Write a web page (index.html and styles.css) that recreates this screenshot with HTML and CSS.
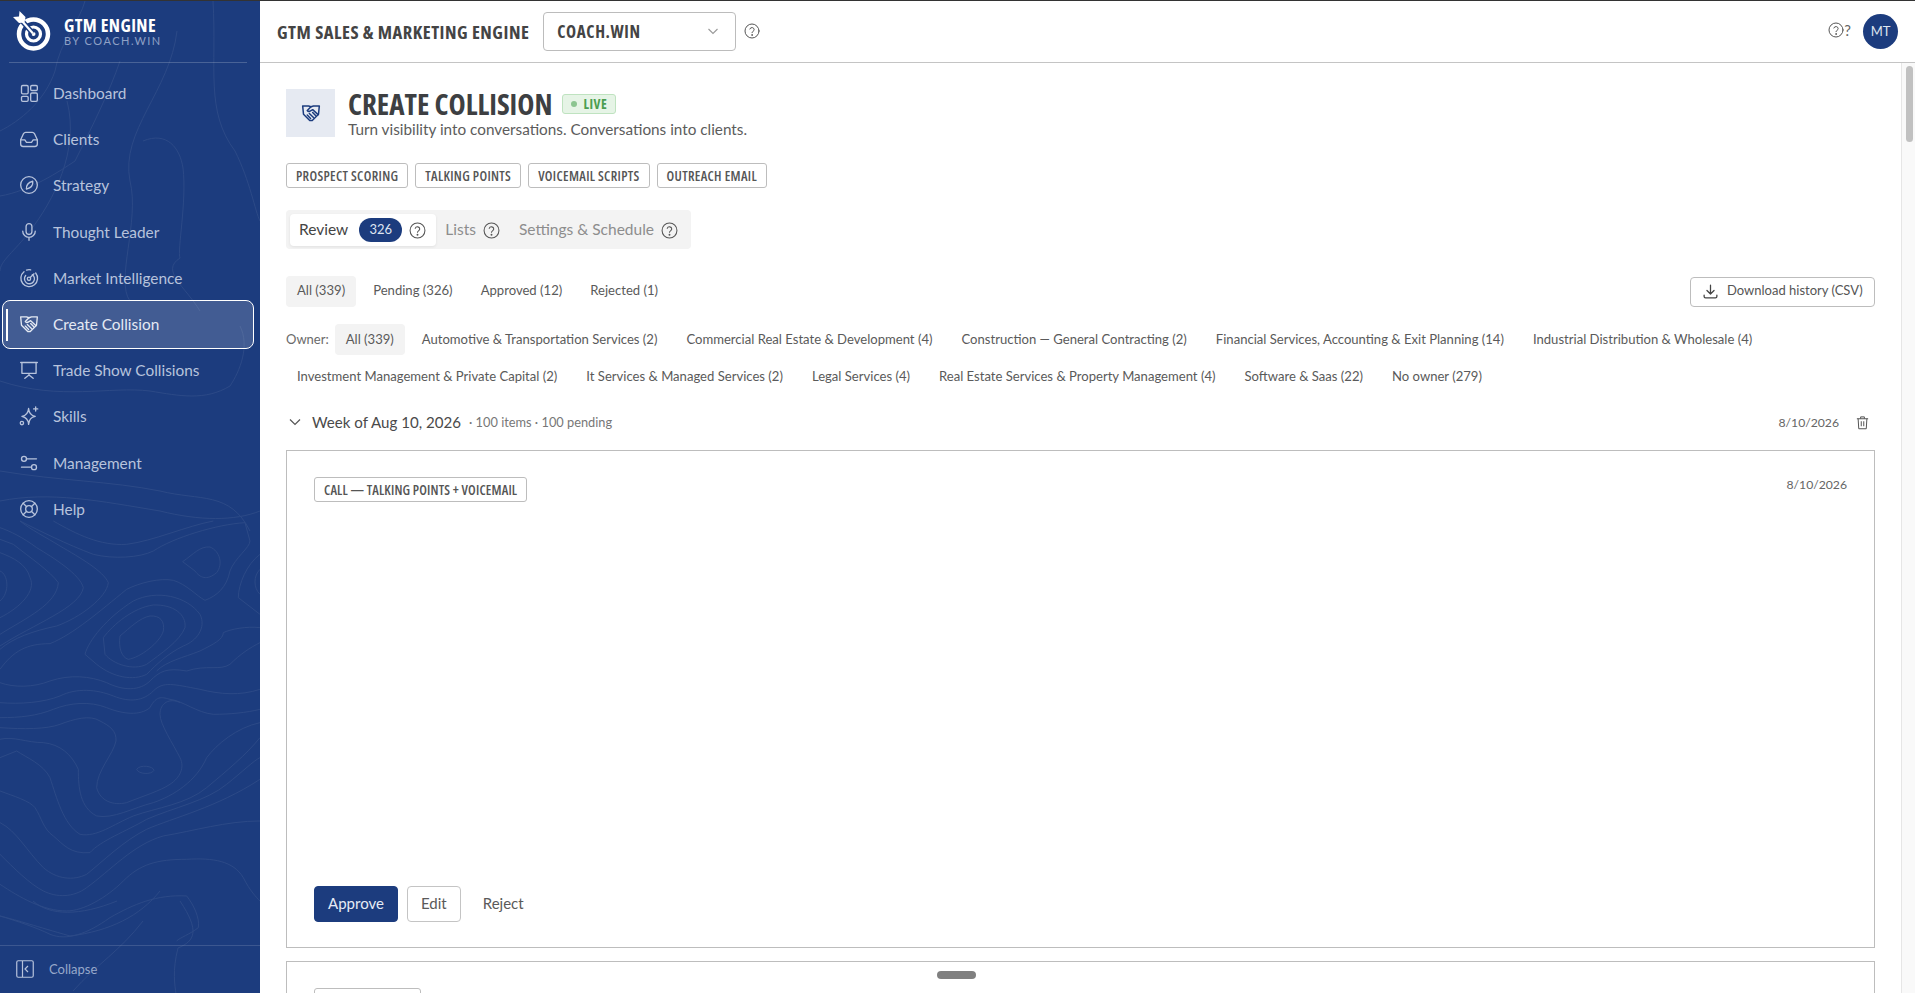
FILE: index.html
```html
<!DOCTYPE html>
<html lang="en">
<head>
  <meta charset="UTF-8">
  <meta name="viewport" content="width=device-width, initial-scale=1.0">
  <title>Create Collision - GTM Engine</title>
  <link rel="stylesheet" href="styles.css">
</head>
<body>
  <div class="app">

    <!-- Sidebar -->
    <aside class="sidebar">
      <svg class="topo" viewBox="0 0 260 993" fill="none" stroke="#fff">
        <!-- lower contours -->
        <g transform="translate(0 520) scale(.3333)" stroke-width="3">
          <path d="M0 445C40 390 80 368 150 368 220 340 300 270 380 205 420 185 480 170 520 178 560 190 590 225 615 238 650 225 680 200 690 150 705 110 750 80 750 60L735 5C650 10 520 50 460 90 420 110 340 115 280 100 200 70 120 30 60 0"/>
          <path d="M360 345C390 320 420 290 450 285 480 283 495 300 490 330 480 365 420 410 385 415 365 410 355 380 360 345Z"/>
          <path d="M310 350C340 310 400 260 460 252 520 250 560 280 555 320 540 360 480 400 440 430 400 450 340 430 315 400Z"/>
          <path d="M255 400C265 360 320 290 400 240 470 205 560 225 600 280 620 320 590 360 550 375 500 400 470 430 440 460 400 480 340 470 290 430Z"/>
          <path d="M548 122C580 100 600 75 630 78 660 90 670 130 650 155 620 180 600 170 585 150Z"/>
          <path d="M0 485C40 500 100 500 150 480 210 460 270 465 320 485 370 510 420 510 450 480 480 450 500 440 560 450 620 430 660 450 690 430 720 400 750 380 780 365"/>
          <path d="M780 320C740 315 690 325 670 335 670 355 640 370 600 390 550 410 500 420 470 450"/>
          <path d="M0 545C60 550 130 545 180 525 230 500 290 505 340 525 390 545 430 540 460 510 490 480 520 490 600 505 660 520 720 525 780 505"/>
          <path d="M0 590C60 590 110 585 160 565 210 545 270 540 320 560 370 580 420 585 450 560 470 520 490 530 510 535 550 540 590 575 640 580 690 580 740 575 780 565"/>
          <path d="M0 620C70 625 140 625 180 610 220 595 270 580 300 600 330 615 350 630 348 660 340 700 290 750 290 800 300 840 340 855 380 845 430 825 480 810 510 790 540 770 555 740 540 710 520 670 480 610 480 580 480 545 510 530 540 545"/>
          <path d="M0 655C40 645 80 665 130 665 180 670 215 700 235 745 235 800 240 860 290 885 340 895 400 860 460 845 520 825 590 780 620 710 650 670 710 620 780 605"/>
          <path d="M0 710 50 690C80 710 130 730 150 770 170 830 190 910 240 940 290 950 340 910 400 885 470 860 560 850 620 800 680 750 740 700 780 650"/>
          <path d="M0 810C40 825 90 840 105 860 125 890 130 925 160 945 190 970 210 1000 270 995 300 960 380 930 440 895 520 860 620 840 680 790 730 750 760 720 780 710"/>
          <path d="M0 905C50 930 80 990 130 1040 170 1075 220 1080 260 1060 310 1020 370 960 440 925 520 890 650 860 780 775"/>
          <path d="M0 1000C40 1040 90 1090 130 1110 170 1130 220 1130 260 1100 330 1050 400 970 490 945 580 930 680 900 780 900"/>
          <path d="M0 1090C60 1130 130 1170 200 1170 250 1170 320 1130 370 1080 420 1030 470 1015 560 1015 640 1010 700 1020 730 1070 750 1110 770 1130 780 1140"/>
          <path d="M0 1185C50 1200 110 1220 150 1240 200 1260 260 1240 330 1190 400 1150 470 1120 560 1125 580 1150 600 1190 595 1220 570 1240 540 1250 530 1260"/>
          <path d="M0 240C30 215 25 160 0 150M0 290C60 260 110 210 90 170 80 130 40 110 0 95M0 340C80 290 170 250 175 185 150 150 90 110 40 70L0 55M0 375C100 310 240 260 250 200 240 160 160 110 110 80 70 50 30 30 0 20M0 385C40 350 100 330 170 315 240 290 320 230 325 185 310 150 240 110 180 75 140 50 90 25 60 0"/>
          <path d="M410 745C420 730 460 735 462 748 455 762 415 760 410 745Z"/>
          <path d="M780 100C740 130 715 190 715 230L780 280M780 145C760 165 760 200 780 220"/>
          <path d="M160 0C230 40 300 75 380 70 460 60 560 15 640 0"/>
        </g>
        <!-- upper contours -->
        <g stroke-width="1">
          <path d="M143 140C167 130 180 147 183 167 187 200 177 250 180 257 160 270 185 285 200 310"/>
          <path d="M67 100C80 150 53 200 30 230 15 250 0 260 0 270"/>
          <path d="M213 0C217 67 205 110 235 150 250 180 255 210 260 220"/>
          <path d="M177 30C170 90 120 130 130 180 140 220 115 280 130 300"/>
          <path d="M0 130C20 120 45 100 55 70 60 40 80 20 85 0"/>
          <path d="M0 195C30 190 60 170 75 160 90 130 110 90 120 60"/>
          <path d="M240 325C250 345 240 370 230 385 205 400 180 395 150 390 110 385 60 400 0 380"/>
          <path d="M0 470C60 480 110 480 160 490 200 500 230 490 250 530"/>
          <path d="M0 500C50 490 100 500 160 510 200 520 235 520 260 510"/>
          <path d="M33 900C50 915 80 915 117 900M0 915C20 920 35 925 70 935 110 930 140 915 160 890"/>
          <path d="M180 900C200 930 195 940 178 947 172 970 175 985 176 993"/>
          <path d="M73 990C97 963 120 950 143 920"/>
        </g>
      </svg>

      <div class="brand">
        <svg class="brand-logo" viewBox="0 0 40 40" fill="none" stroke="#fff">
          <circle cx="20.500" cy="23" r="14.500" stroke-width="4.500"/>
          <circle cx="20.500" cy="23" r="7" stroke-width="3.200"/>
          <circle cx="20.500" cy="23" r="2" fill="#fff" stroke="none"/>
          <path d="M9 10 20 22.500" stroke="#1c3c7e" stroke-width="5"/>
          <path d="M9 10 20 22.500" stroke-width="2.200"/>
          <path d="M0 6 6 5.500 6.500 0 12.500 6 11.500 11.500 6 12z" fill="#fff" stroke="none"/>
        </svg>
        <div>
          <div class="brand-name">GTM ENGINE</div>
          <div class="brand-sub">BY COACH.WIN</div>
        </div>
      </div>

      <nav class="nav">
        <a class="nav-item" href="#">
          <svg class="nav-icon" viewBox="0 0 24 24"><rect x="3" y="3" width="8" height="10" rx="1.500"/><rect x="14" y="3" width="8" height="6" rx="1.500"/><rect x="14" y="12" width="8" height="10" rx="1.500"/><rect x="3" y="16" width="8" height="6" rx="1.500"/></svg>
          Dashboard
        </a>
        <a class="nav-item" href="#">
          <svg class="nav-icon" viewBox="0 0 24 24"><path d="M2 13v5a3 3 0 0 0 3 3h14a3 3 0 0 0 3-3v-5l-3.500-7.500A3 3 0 0 0 16 4H8a3 3 0 0 0-2.500 1.500z"/><path d="M2 13h5l2 3h6l2-3h5"/></svg>
          Clients
        </a>
        <a class="nav-item" href="#">
          <svg class="nav-icon" viewBox="0 0 24 24"><circle cx="12" cy="12" r="10"/><path d="M16.500 7.500c.5 4-2 8-7.500 9.500-.5-4 2-8 7.500-9.500z"/></svg>
          Strategy
        </a>
        <a class="nav-item" href="#">
          <svg class="nav-icon" viewBox="0 0 24 24"><rect x="8.500" y="2" width="7" height="13" rx="3.500"/><path d="M4.500 11a7.500 7.500 0 0 0 15 0M12 18.500V22"/></svg>
          Thought Leader
        </a>
        <a class="nav-item" href="#">
          <svg class="nav-icon" viewBox="0 0 24 24"><path d="M6 4.500A10 10 0 1 0 20 6"/><path d="M9 2.500a10 10 0 0 1 5-.3M8 9a6 6 0 1 0 8-1"/><circle cx="12" cy="13" r="2"/><path d="M13.500 11.500 18 7"/></svg>
          Market Intelligence
        </a>
        <a class="nav-item active" href="#">
          <svg class="nav-icon" viewBox="0 0 24 24"><use href="#shake"/></svg>
          Create Collision
        </a>
        <a class="nav-item" href="#">
          <svg class="nav-icon" viewBox="0 0 24 24"><path d="M2 3h20M3.500 3v13h17V3M12 16v2M7 22l5-4 5 4"/></svg>
          Trade Show Collisions
        </a>
        <a class="nav-item" href="#">
          <svg class="nav-icon" viewBox="0 0 24 24"><path d="M12.500 3c.5 6 2.500 8.500 8 9.500-5.500 1-7.500 3.500-8 9.500-.5-6-3-8.500-8-9.500 5-1 7.500-3.500 8-9.500z" transform="translate(-1 0)"/><path d="M20 1v5M17.500 3.500h5"/><circle cx="3.500" cy="20.500" r="2"/></svg>
          Skills
        </a>
        <a class="nav-item" href="#">
          <svg class="nav-icon" viewBox="0 0 24 24"><circle cx="6" cy="7" r="3"/><path d="M9 7h12M3 17h12"/><circle cx="18" cy="17" r="3"/></svg>
          Management
        </a>
        <a class="nav-item" href="#">
          <svg class="nav-icon" viewBox="0 0 24 24"><circle cx="12" cy="12" r="10"/><circle cx="12" cy="12" r="4"/><path d="m5 5 4.200 4.200M14.800 14.800 19 19M19 5l-4.200 4.200M9.200 14.800 5 19"/></svg>
          Help
        </a>
      </nav>

      <div class="collapse">
        <svg class="collapse-icon" viewBox="0 0 18 18"><rect x=".75" y=".75" width="16.500" height="16.500" rx="1.500"/><path d="M6.500 1v16M12 6l-3 3 3 3"/></svg>
        Collapse
      </div>
    </aside>

    <div class="main">
      <!-- Top bar -->
      <header class="topbar">
        <div class="topbar-title">GTM SALES &amp; MARKETING ENGINE</div>
        <div class="client-select">
          <span>COACH.WIN</span>
          <svg class="select-arrow" viewBox="0 0 12 12"><path d="m1.500 4 4.500 4.500L10.500 4"/></svg>
        </div>
        <svg class="help-icon" viewBox="0 0 24 24"><use href="#help"/></svg>
        <div class="topbar-right">
          <span class="topbar-help"><svg class="help-icon" viewBox="0 0 24 24"><use href="#help"/></svg>?</span>
          <div class="avatar">MT</div>
        </div>
      </header>

      <div class="scroll-area">
        <main class="content">

          <!-- Page heading -->
          <div class="page-head">
            <div class="page-icon">
              <svg viewBox="0 0 24 24"><use href="#shake"/></svg>
            </div>
            <div>
              <div class="page-title-row">
                <h1>CREATE COLLISION</h1>
                <span class="live"><i></i>LIVE</span>
              </div>
              <p class="page-sub">Turn visibility into conversations. Conversations into clients.</p>
            </div>
          </div>

          <div class="tags">
            <span class="tag">PROSPECT SCORING</span>
            <span class="tag">TALKING POINTS</span>
            <span class="tag">VOICEMAIL SCRIPTS</span>
            <span class="tag">OUTREACH EMAIL</span>
          </div>

          <!-- Tabs -->
          <div class="tabs">
            <div class="tab current">Review <span class="count">326</span><svg class="help-icon" viewBox="0 0 24 24"><use href="#help"/></svg></div>
            <div class="tab">Lists <svg class="help-icon" viewBox="0 0 24 24"><use href="#help"/></svg></div>
            <div class="tab">Settings &amp; Schedule <svg class="help-icon" viewBox="0 0 24 24"><use href="#help"/></svg></div>
          </div>

          <!-- Status filter -->
          <div class="status-row">
            <a class="chip on" href="#">All (339)</a>
            <a class="chip" href="#">Pending (326)</a>
            <a class="chip" href="#">Approved (12)</a>
            <a class="chip" href="#">Rejected (1)</a>
            <button class="download">
              <svg viewBox="0 0 24 24"><path d="M12 3v12M7 10.500l5 5 5-5M3 17v2a2 2 0 0 0 2 2h14a2 2 0 0 0 2-2v-2"/></svg>
              Download history (CSV)
            </button>
          </div>

          <!-- Owner filter -->
          <div class="owner-row">
            <span class="owner-label">Owner:</span>
            <a class="chip on" href="#">All (339)</a>
            <a class="chip" href="#">Automotive &amp; Transportation Services (2)</a>
            <a class="chip" href="#">Commercial Real Estate &amp; Development (4)</a>
            <a class="chip" href="#">Construction — General Contracting (2)</a>
            <a class="chip" href="#">Financial Services, Accounting &amp; Exit Planning (14)</a>
            <a class="chip" href="#">Industrial Distribution &amp; Wholesale (4)</a>
            <a class="chip" href="#">Investment Management &amp; Private Capital (2)</a>
            <a class="chip" href="#">It Services &amp; Managed Services (2)</a>
            <a class="chip" href="#">Legal Services (4)</a>
            <a class="chip" href="#">Real Estate Services &amp; Property Management (4)</a>
            <a class="chip" href="#">Software &amp; Saas (22)</a>
            <a class="chip" href="#">No owner (279)</a>
          </div>

          <!-- Week group -->
          <div class="week">
            <svg class="week-arrow" viewBox="0 0 12 12"><path d="m1 3.500 5 5 5-5"/></svg>
            <span class="week-name">Week of Aug 10, 2026</span>
            <span class="week-meta">· 100 items · 100 pending</span>
            <span class="week-date">8/10/2026</span>
            <svg class="trash" viewBox="0 0 24 24"><path d="M3 6h18M9 6V3h6v3M5 6l1 16h12l1-16M10 10v8M14 10v8"/></svg>
          </div>

          <article class="card">
            <div class="card-top">
              <span class="tag">CALL — TALKING POINTS + VOICEMAIL</span>
              <span class="card-date">8/10/2026</span>
            </div>
            <div class="card-actions">
              <button class="btn primary">Approve</button>
              <button class="btn">Edit</button>
              <button class="btn plain">Reject</button>
            </div>
          </article>

          <article class="card next">
            <div class="card-top">
              <span class="tag tag-stub"></span>
            </div>
          </article>
        </main>

        <div class="scrollbar"><div class="thumb"></div></div>
      </div>
      <div class="drag-handle"></div>
    </div>
  </div>

  <!-- Shared icons -->
  <svg class="defs" aria-hidden="true">
    <symbol id="help" viewBox="0 0 24 24">
      <circle cx="12" cy="12" r="10.500"/>
      <path d="M8.800 9a3.300 3.300 0 0 1 6.400 1c0 2.200-3.200 2.600-3.200 4.500"/>
      <circle cx="12" cy="18" r=".6"/>
    </symbol>
    <symbol id="shake" viewBox="0 0 24 24">
      <path d="M2 3.500h7l3 1 3-1h7l-1 10-7.500 7.500h-3L3 13.500z"/>
      <path d="M12 4.500 7.500 9c1 1.500 2.500 1.500 4 .5L14 8l6.500 6"/>
      <path d="M7.500 14.500l4 4M10 12.500l5 5M14 11.500l3.500 3.500"/>
    </symbol>
  </svg>
</body>
</html>
```

FILE: styles.css
```css
* {
  box-sizing: border-box;
}

html, body {
  height: 100%;
  margin: 0;
  overflow: hidden;
}

body {
  font-family: 'Lato', sans-serif;
  color: #4a4a4a;
  background-color: #fff;
}

a {
  color: inherit;
  text-decoration: none;
}

.defs {
  position: absolute;
  width: 0;
  height: 0;
}

.app {
  display: flex;
  height: 100vh;
  border-top: 1px solid #333;
}

/* Sidebar */
.sidebar {
  position: relative;
  flex: 0 0 260px;
  display: flex;
  flex-direction: column;
  background-color: #1c3c7e;
  color: #b7c3dc;
  overflow: hidden;
}

.topo {
  position: absolute;
  top: 0;
  left: 0;
  width: 260px;
  height: 993px;
  opacity: 0.065;
}

.brand {
  position: relative;
  display: flex;
  align-items: center;
  gap: 11px;
  height: 62px;
  margin: 0 13px 0 9px;
  padding: 0 0 1px 4px;
  border-bottom: 1px solid rgba(255, 255, 255, 0.2);
}

.brand-logo {
  width: 40px;
  height: 40px;
  overflow: visible;
}

.brand-name {
  font-family: 'Open Sans', sans-serif;
  font-stretch: 75%;
  font-weight: 700;
  font-size: 18px;
  line-height: 20px;
  letter-spacing: 0.400px;
  color: #fff;
}

.brand-sub {
  font-size: 11px;
  line-height: 12px;
  letter-spacing: 1.500px;
  color: #8fa1c6;
}

.nav {
  position: relative;
  display: flex;
  flex-direction: column;
  padding: 7px 6px 0 2px;
}

.nav-item {
  position: relative;
  display: flex;
  align-items: center;
  gap: 14px;
  height: 46.200px;
  padding-left: 17px;
  font-size: 15.400px;
}

.nav-icon {
  width: 20px;
  height: 20px;
  fill: none;
  stroke: currentColor;
  stroke-width: 1.600;
  stroke-linecap: round;
  stroke-linejoin: round;
}

.nav-item.active {
  height: 49px;
  margin: -1.400px 0;
  color: #e4e9f3;
  background-color: rgba(255, 255, 255, 0.17);
  border: 1px solid #fff;
  border-radius: 8px;
  padding-left: 16px;
}

.nav-item.active::before {
  content: "";
  position: absolute;
  left: 3px;
  top: 8px;
  bottom: 7px;
  width: 1.500px;
  background-color: #fff;
}

.collapse {
  position: relative;
  display: flex;
  align-items: center;
  gap: 15px;
  height: 48px;
  margin-top: auto;
  padding: 0 0 2px 16px;
  font-size: 13px;
  color: #97a8ca;
  border-top: 1px solid rgba(255, 255, 255, 0.14);
}

.collapse-icon {
  width: 18px;
  height: 18px;
  fill: none;
  stroke: #b7c3dc;
  stroke-width: 1.200;
}

/* Main column */
.main {
  position: relative;
  flex: 1;
  min-width: 0;
  display: flex;
  flex-direction: column;
}

.topbar {
  flex: 0 0 62px;
  display: flex;
  align-items: center;
  padding: 0 17px 1px 17px;
  border-bottom: 1px solid #c4c4c4;
}

.topbar-title {
  font-family: 'Open Sans', sans-serif;
  font-stretch: 75%;
  font-weight: 700;
  font-size: 18.500px;
  letter-spacing: 0.500px;
  color: #444;
  margin-right: 14px;
}

.client-select {
  display: flex;
  align-items: center;
  justify-content: space-between;
  width: 193px;
  height: 39px;
  padding: 0 16px 0 13px;
  margin-right: 8px;
  border: 1px solid #bcbcbc;
  border-radius: 4px;
  font-family: 'Open Sans', sans-serif;
  font-stretch: 75%;
  font-weight: 700;
  font-size: 17px;
  letter-spacing: 0.600px;
  color: #444;
}

.select-arrow {
  width: 12px;
  height: 12px;
  fill: none;
  stroke: #999;
  stroke-width: 1.100;
}

.help-icon {
  width: 16px;
  height: 16px;
  fill: none;
  stroke: #555;
  stroke-width: 1.500;
  stroke-linecap: round;
  flex: none;
}

.topbar-right {
  display: flex;
  align-items: center;
  gap: 12px;
  margin-left: auto;
}

.topbar-help {
  display: flex;
  align-items: center;
  margin-bottom: 3px;
  font-size: 15px;
  color: #666;
}

.avatar {
  display: flex;
  align-items: center;
  justify-content: center;
  width: 35px;
  height: 35px;
  border-radius: 50%;
  background-color: #1c3c7e;
  color: #dfe5f1;
  font-size: 13px;
}

.scroll-area {
  flex: 1;
  min-height: 0;
  display: flex;
  overflow: hidden;
}

.content {
  flex: 1;
  min-width: 0;
  padding: 26px 26px 0 26px;
}

.scrollbar {
  flex: 0 0 14px;
  padding: 3px 2px 0 4px;
  background-color: #f9f9f9;
  border-left: 1px solid #e6e6e6;
}

.thumb {
  height: 76px;
  border-radius: 4px;
  background-color: #c1c1c1;
}

/* Page heading */
.page-head {
  display: flex;
  align-items: flex-start;
  gap: 13px;
  height: 48px;
}

.page-icon {
  display: flex;
  align-items: center;
  justify-content: center;
  width: 49px;
  height: 48px;
  background-color: #e6eaf2;
}

.page-icon svg {
  width: 20px;
  height: 20px;
  fill: none;
  stroke: #1c3c7e;
  stroke-width: 1.800;
  stroke-linecap: round;
  stroke-linejoin: round;
}

.page-title-row {
  display: flex;
  align-items: center;
  gap: 9px;
}

h1 {
  margin: 0;
  font-family: 'Open Sans', sans-serif;
  font-stretch: 75%;
  font-weight: 700;
  font-size: 29px;
  line-height: 29px;
  color: #3d3f42;
}

.live {
  display: flex;
  align-items: center;
  gap: 7px;
  height: 20px;
  padding: 0 8px;
  background-color: #e6f4e6;
  border: 1px solid #bfe3c0;
  border-radius: 3px;
  font-family: 'Open Sans', sans-serif;
  font-stretch: 75%;
  font-weight: 700;
  font-size: 13.500px;
  letter-spacing: 0.500px;
  color: #4b9e50;
}

.live i {
  width: 6px;
  height: 6px;
  border-radius: 50%;
  background-color: #8cc590;
}

.page-sub {
  margin: 2px 0 0;
  font-size: 15.300px;
  line-height: 18px;
  color: #5c5c5c;
}

.tags {
  display: flex;
  gap: 7px;
  margin-top: 26px;
}

.tag {
  display: inline-flex;
  align-items: center;
  height: 25px;
  padding: 0 9px;
  border: 1px solid #bdbdbd;
  border-radius: 3px;
  font-family: 'Open Sans', sans-serif;
  font-stretch: 75%;
  font-weight: 600;
  font-size: 13.500px;
  letter-spacing: 0.320px;
  color: #555;
}

.card .tag {
  letter-spacing: 0.150px;
}

.tag-stub {
  width: 107px;
}

/* Tabs */
.tabs {
  display: inline-flex;
  align-items: center;
  height: 39px;
  margin-top: 22px;
  padding: 4px 4px 3px 4px;
  background-color: #f3f3f3;
  border-radius: 4px;
  font-size: 15.500px;
  color: #8d8d8d;
}

.tab {
  display: flex;
  align-items: center;
  gap: 7px;
  height: 32px;
  padding: 0 9.500px 2px 9.500px;
}

.tab.current {
  padding: 0 9.500px 2px 9px;
  background-color: #fff;
  border-radius: 4px;
  box-shadow: 0 1px 3px rgba(0, 0, 0, 0.08);
  color: #444;
}

.tab .help-icon {
  width: 17px;
  height: 17px;
  margin-top: 2px;
}

.count {
  display: inline-flex;
  align-items: center;
  justify-content: center;
  width: 43px;
  height: 24px;
  margin: 2px 0 0 4px;
  padding-bottom: 2px;
  border-radius: 12px;
  background-color: #1c3c7e;
  color: #dfe5f1;
  font-size: 13px;
}

/* Filter rows */
.status-row {
  display: flex;
  align-items: center;
  height: 31px;
  margin-top: 27px;
}

.chip {
  display: flex;
  align-items: center;
  height: 31px;
  padding: 0 11px 2px;
  border-radius: 4px;
  font-size: 13.080px;
  color: #5a5a5a;
  white-space: nowrap;
}

.chip.on {
  background-color: #f3f3f3;
}

.status-row .chip {
  margin-right: 6px;
  font-size: 13.100px;
  padding-bottom: 3px;
}

.owner-row .chip.on {
  margin: 0 -1px;
}

.download {
  display: flex;
  align-items: center;
  gap: 8px;
  width: 185px;
  height: 30px;
  margin-left: auto;
  padding: 0 11px 3px;
  background-color: #fff;
  border: 1px solid #bdbdbd;
  border-radius: 4px;
  font-family: inherit;
  font-size: 13px;
  color: #555;
}

.download svg {
  width: 17px;
  height: 17px;
  margin-top: 3px;
  fill: none;
  stroke: #444;
  stroke-width: 1.800;
  stroke-linecap: round;
  stroke-linejoin: round;
}

.owner-row {
  display: flex;
  flex-wrap: wrap;
  align-items: center;
  column-gap: 7px;
  row-gap: 6px;
  margin-top: 17px;
}

.owner-label {
  padding-bottom: 2px;
  font-size: 13px;
  color: #6a6a6a;
}

/* Week group */
.week {
  display: flex;
  align-items: center;
  height: 22px;
  margin-top: 19px;
  padding-left: 3px;
}

.week-arrow {
  width: 12px;
  height: 12px;
  margin-right: 11px;
  fill: none;
  stroke: #555;
  stroke-width: 1.200;
}

.week-name {
  font-size: 15.100px;
  color: #4a4a4a;
}

.week-meta {
  margin-left: 8px;
  font-size: 12.800px;
  color: #777;
}

.week-date {
  margin-left: auto;
  font-size: 12.200px;
  color: #666;
}

.trash {
  width: 15px;
  height: 15px;
  margin: 1px 5px 0 16px;
  fill: none;
  stroke: #555;
  stroke-width: 1.600;
}

/* Cards */
.card {
  display: flex;
  flex-direction: column;
  justify-content: space-between;
  height: 498px;
  margin-top: 17px;
  padding: 26px 27px 25px 27px;
  border: 1px solid #bdbdbd;
}

.card-top {
  display: flex;
  align-items: flex-start;
  justify-content: space-between;
}

.card-date {
  font-size: 12.200px;
  color: #666;
}

.card-actions {
  display: flex;
  gap: 9px;
}

.btn {
  height: 36px;
  padding: 0 13px 2px;
  background-color: #fff;
  border: 1px solid #c4c4c4;
  border-radius: 4px;
  font-family: inherit;
  font-size: 15px;
  color: #5a5a5a;
}

.btn.primary {
  width: 84px;
  background-color: #1c3c7e;
  border-color: #1c3c7e;
  color: #e6ebf5;
}

.btn.plain {
  border-color: transparent;
  background-color: transparent;
  margin-left: -1px;
}

.card.next {
  height: 200px;
  margin-top: 13px;
}

/* Resize handle lying over the content */
.drag-handle {
  position: absolute;
  left: 677px;
  bottom: 14px;
  width: 39px;
  height: 8px;
  border-radius: 4px;
  background-color: #808080;
  box-shadow: 0 0 0 4px rgba(255, 255, 255, 0.8);
}
```
